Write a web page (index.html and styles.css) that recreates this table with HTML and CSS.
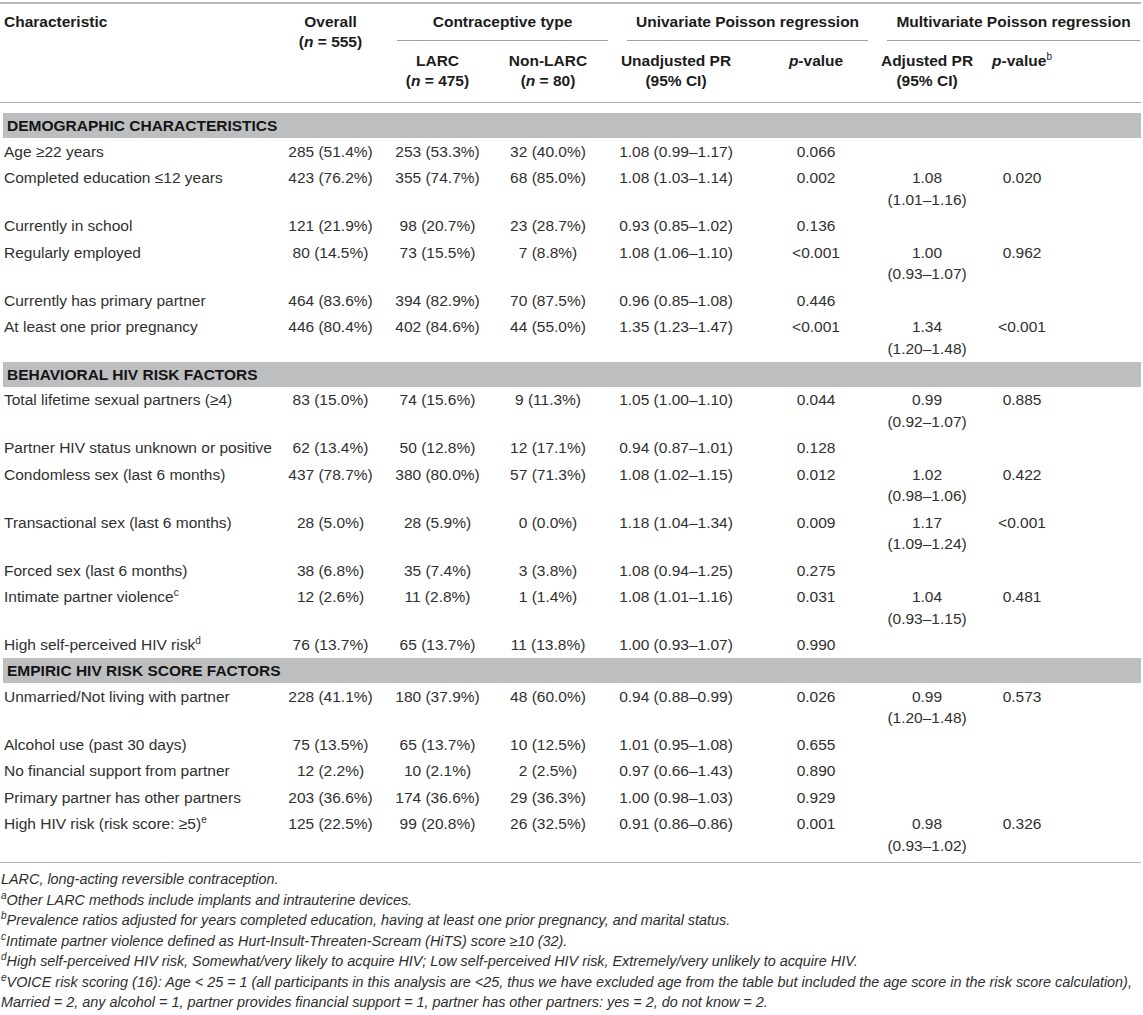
FILE: index.html
```html
<!DOCTYPE html>
<html lang="en">
<head>
<meta charset="utf-8">
<title>Table</title>
<link rel="stylesheet" href="styles.css">
</head>
<body>
<table class="tbl">
  <colgroup>
    <col class="w-char"><col class="w-all"><col class="w-larc"><col class="w-non">
    <col class="w-unadj"><col class="w-p"><col class="w-adj"><col class="w-pb">
  </colgroup>
  <thead>
    <tr class="hr1">
      <th rowspan="2" class="left">Characteristic</th>
      <th rowspan="2" class="c-all">Overall<br>(<i>n</i> = 555)</th>
      <th colspan="2" class="grp"><div class="grp-in g-contra">Contraceptive type</div></th>
      <th colspan="2" class="grp"><div class="grp-in g-uni">Univariate Poisson regression</div></th>
      <th colspan="2" class="grp"><div class="grp-in g-multi">Multivariate Poisson regression</div></th>
    </tr>
    <tr class="hr2">
      <th class="c-larc">LARC<br>(<i>n</i> = 475)</th>
      <th class="c-non">Non-LARC<br>(<i>n</i> = 80)</th>
      <th class="c-unadj">Unadjusted PR<br>(95% CI)</th>
      <th class="c-p"><i>p</i>-value</th>
      <th class="c-adj">Adjusted PR<br>(95% CI)</th>
      <th class="c-pb"><i>p</i>-value<sup>b</sup></th>
    </tr>
  </thead>
  <tbody>
    <tr class="band first"><td colspan="8"><div class="band-in">DEMOGRAPHIC CHARACTERISTICS</div></td></tr>
    <tr><td class="left">Age ≥22 years</td><td class="c-all">285 (51.4%)</td><td class="c-larc">253 (53.3%)</td><td class="c-non">32 (40.0%)</td><td class="c-unadj">1.08 (0.99–1.17)</td><td class="c-p">0.066</td><td class="c-adj"></td><td class="c-pb"></td></tr>
    <tr><td class="left">Completed education ≤12 years</td><td class="c-all">423 (76.2%)</td><td class="c-larc">355 (74.7%)</td><td class="c-non">68 (85.0%)</td><td class="c-unadj">1.08 (1.03–1.14)</td><td class="c-p">0.002</td><td class="c-adj">1.08<br>(1.01–1.16)</td><td class="c-pb">0.020</td></tr>
    <tr><td class="left">Currently in school</td><td class="c-all">121 (21.9%)</td><td class="c-larc">98 (20.7%)</td><td class="c-non">23 (28.7%)</td><td class="c-unadj">0.93 (0.85–1.02)</td><td class="c-p">0.136</td><td class="c-adj"></td><td class="c-pb"></td></tr>
    <tr><td class="left">Regularly employed</td><td class="c-all">80 (14.5%)</td><td class="c-larc">73 (15.5%)</td><td class="c-non">7 (8.8%)</td><td class="c-unadj">1.08 (1.06–1.10)</td><td class="c-p">&lt;0.001</td><td class="c-adj">1.00<br>(0.93–1.07)</td><td class="c-pb">0.962</td></tr>
    <tr><td class="left">Currently has primary partner</td><td class="c-all">464 (83.6%)</td><td class="c-larc">394 (82.9%)</td><td class="c-non">70 (87.5%)</td><td class="c-unadj">0.96 (0.85–1.08)</td><td class="c-p">0.446</td><td class="c-adj"></td><td class="c-pb"></td></tr>
    <tr><td class="left">At least one prior pregnancy</td><td class="c-all">446 (80.4%)</td><td class="c-larc">402 (84.6%)</td><td class="c-non">44 (55.0%)</td><td class="c-unadj">1.35 (1.23–1.47)</td><td class="c-p">&lt;0.001</td><td class="c-adj">1.34<br>(1.20–1.48)</td><td class="c-pb">&lt;0.001</td></tr>

    <tr class="band"><td colspan="8"><div class="band-in">BEHAVIORAL HIV RISK FACTORS</div></td></tr>
    <tr><td class="left">Total lifetime sexual partners (≥4)</td><td class="c-all">83 (15.0%)</td><td class="c-larc">74 (15.6%)</td><td class="c-non">9 (11.3%)</td><td class="c-unadj">1.05 (1.00–1.10)</td><td class="c-p">0.044</td><td class="c-adj">0.99<br>(0.92–1.07)</td><td class="c-pb">0.885</td></tr>
    <tr><td class="left">Partner HIV status unknown or positive</td><td class="c-all">62 (13.4%)</td><td class="c-larc">50 (12.8%)</td><td class="c-non">12 (17.1%)</td><td class="c-unadj">0.94 (0.87–1.01)</td><td class="c-p">0.128</td><td class="c-adj"></td><td class="c-pb"></td></tr>
    <tr><td class="left">Condomless sex (last 6 months)</td><td class="c-all">437 (78.7%)</td><td class="c-larc">380 (80.0%)</td><td class="c-non">57 (71.3%)</td><td class="c-unadj">1.08 (1.02–1.15)</td><td class="c-p">0.012</td><td class="c-adj">1.02<br>(0.98–1.06)</td><td class="c-pb">0.422</td></tr>
    <tr><td class="left">Transactional sex (last 6 months)</td><td class="c-all">28 (5.0%)</td><td class="c-larc">28 (5.9%)</td><td class="c-non">0 (0.0%)</td><td class="c-unadj">1.18 (1.04–1.34)</td><td class="c-p">0.009</td><td class="c-adj">1.17<br>(1.09–1.24)</td><td class="c-pb">&lt;0.001</td></tr>
    <tr><td class="left">Forced sex (last 6 months)</td><td class="c-all">38 (6.8%)</td><td class="c-larc">35 (7.4%)</td><td class="c-non">3 (3.8%)</td><td class="c-unadj">1.08 (0.94–1.25)</td><td class="c-p">0.275</td><td class="c-adj"></td><td class="c-pb"></td></tr>
    <tr><td class="left">Intimate partner violence<sup>c</sup></td><td class="c-all">12 (2.6%)</td><td class="c-larc">11 (2.8%)</td><td class="c-non">1 (1.4%)</td><td class="c-unadj">1.08 (1.01–1.16)</td><td class="c-p">0.031</td><td class="c-adj">1.04<br>(0.93–1.15)</td><td class="c-pb">0.481</td></tr>
    <tr><td class="left">High self-perceived HIV risk<sup>d</sup></td><td class="c-all">76 (13.7%)</td><td class="c-larc">65 (13.7%)</td><td class="c-non">11 (13.8%)</td><td class="c-unadj">1.00 (0.93–1.07)</td><td class="c-p">0.990</td><td class="c-adj"></td><td class="c-pb"></td></tr>

    <tr class="band"><td colspan="8"><div class="band-in">EMPIRIC HIV RISK SCORE FACTORS</div></td></tr>
    <tr><td class="left">Unmarried/Not living with partner</td><td class="c-all">228 (41.1%)</td><td class="c-larc">180 (37.9%)</td><td class="c-non">48 (60.0%)</td><td class="c-unadj">0.94 (0.88–0.99)</td><td class="c-p">0.026</td><td class="c-adj">0.99<br>(1.20–1.48)</td><td class="c-pb">0.573</td></tr>
    <tr><td class="left">Alcohol use (past 30 days)</td><td class="c-all">75 (13.5%)</td><td class="c-larc">65 (13.7%)</td><td class="c-non">10 (12.5%)</td><td class="c-unadj">1.01 (0.95–1.08)</td><td class="c-p">0.655</td><td class="c-adj"></td><td class="c-pb"></td></tr>
    <tr><td class="left">No financial support from partner</td><td class="c-all">12 (2.2%)</td><td class="c-larc">10 (2.1%)</td><td class="c-non">2 (2.5%)</td><td class="c-unadj">0.97 (0.66–1.43)</td><td class="c-p">0.890</td><td class="c-adj"></td><td class="c-pb"></td></tr>
    <tr><td class="left">Primary partner has other partners</td><td class="c-all">203 (36.6%)</td><td class="c-larc">174 (36.6%)</td><td class="c-non">29 (36.3%)</td><td class="c-unadj">1.00 (0.98–1.03)</td><td class="c-p">0.929</td><td class="c-adj"></td><td class="c-pb"></td></tr>
    <tr class="last"><td class="left">High HIV risk (risk score: ≥5)<sup>e</sup></td><td class="c-all">125 (22.5%)</td><td class="c-larc">99 (20.8%)</td><td class="c-non">26 (32.5%)</td><td class="c-unadj">0.91 (0.86–0.86)</td><td class="c-p">0.001</td><td class="c-adj">0.98<br>(0.93–1.02)</td><td class="c-pb">0.326</td></tr>
  </tbody>
</table>
<div class="notes">
  <p>LARC, long-acting reversible contraception.</p>
  <p><sup>a</sup>Other LARC methods include implants and intrauterine devices.</p>
  <p><sup>b</sup>Prevalence ratios adjusted for years completed education, having at least one prior pregnancy, and marital status.</p>
  <p><sup>c</sup>Intimate partner violence defined as Hurt-Insult-Threaten-Scream (HiTS) score ≥10 (32).</p>
  <p><sup>d</sup>High self-perceived HIV risk, Somewhat/very likely to acquire HIV; Low self-perceived HIV risk, Extremely/very unlikely to acquire HIV.</p>
  <p><sup>e</sup>VOICE risk scoring (16): Age &lt; 25 = 1 (all participants in this analysis are &lt;25, thus we have excluded age from the table but included the age score in the risk score calculation),</p>
  <p>Married = 2, any alcohol = 1, partner provides financial support = 1, partner has other partners: yes = 2, do not know = 2.</p>
</div>
</body>
</html>
```
FILE: styles.css
```css
html, body {
  margin: 0;
  padding: 0;
  background: #ffffff;
}

body {
  font-family: "Liberation Sans", Arial, sans-serif;
  color: #303030;
}

.tbl {
  margin-top: 2px;
  width: 1141px;
  table-layout: fixed;
  border-collapse: separate;
  border-spacing: 0;
  border-top: 2px solid #b9b9b9;
  font-size: 15.5px;
}

.w-char { width: 274px; }
.w-all { width: 113px; }
.w-larc { width: 101px; }
.w-non { width: 130px; }
.w-unadj { width: 120px; }
.w-p { width: 140px; }
.w-adj { width: 98px; }
.w-pb { width: 165px; }

th {
  font-weight: bold;
  color: #1c1c1c;
  vertical-align: top;
  text-align: center;
  line-height: 20px;
  white-space: nowrap;
  padding: 0 4px;
}

.hr1 th {
  padding-top: 8px;
}

.hr1 th[rowspan] {
  border-bottom: 1.5px solid #a9a9a9;
}

.hr1 th.grp {
  padding-left: 0;
  padding-right: 0;
}

.grp-in {
  padding-bottom: 8px;
  border-bottom: 1px solid #a3a3a3;
}

.g-contra { margin: 0 10px; }
.g-uni { margin: 0 10px 0 9px; }
.g-multi { margin: 0 1px 0 9px; }

.hr2 th {
  padding-top: 10px;
  padding-bottom: 11px;
  border-bottom: 1.5px solid #a9a9a9;
}

th.left, td.left {
  text-align: left;
  padding-left: 4px;
}

td {
  font-size: 15.5px;
  line-height: 21.5px;
  padding: 2.5px 4px;
  vertical-align: top;
  text-align: center;
  white-space: nowrap;
}

.c-non { padding-left: 0; padding-right: 10px; }
.c-unadj { padding-left: 0; padding-right: 4px; }
.c-p { padding-left: 16px; padding-right: 0; }
.c-adj { padding-left: 0; padding-right: 0; }
.c-pb { padding-left: 0; padding-right: 73px; }

sup {
  font-size: 10px;
  line-height: 0;
  vertical-align: 6px;
}

th sup {
  font-weight: normal;
}

.band td {
  padding: 0;
}

.band.first td {
  padding-top: 10px;
}

.band-in {
  margin-left: 3px;
  height: 25px;
  line-height: 25px;
  padding-left: 4px;
  background: #bdbec0;
  font-weight: bold;
  color: #141414;
  text-align: left;
}

.last td {
  padding-bottom: 6px;
  border-bottom: 1.5px solid #b3b3b3;
}

.notes {
  margin-top: 6px;
  font-style: italic;
  font-size: 14.4px;
  line-height: 20.5px;
  color: #2e2e2e;
  padding-left: 1px;
}

.notes p {
  margin: 0;
  white-space: nowrap;
}

.notes sup {
  font-size: 10px;
  vertical-align: 6px;
}
```
